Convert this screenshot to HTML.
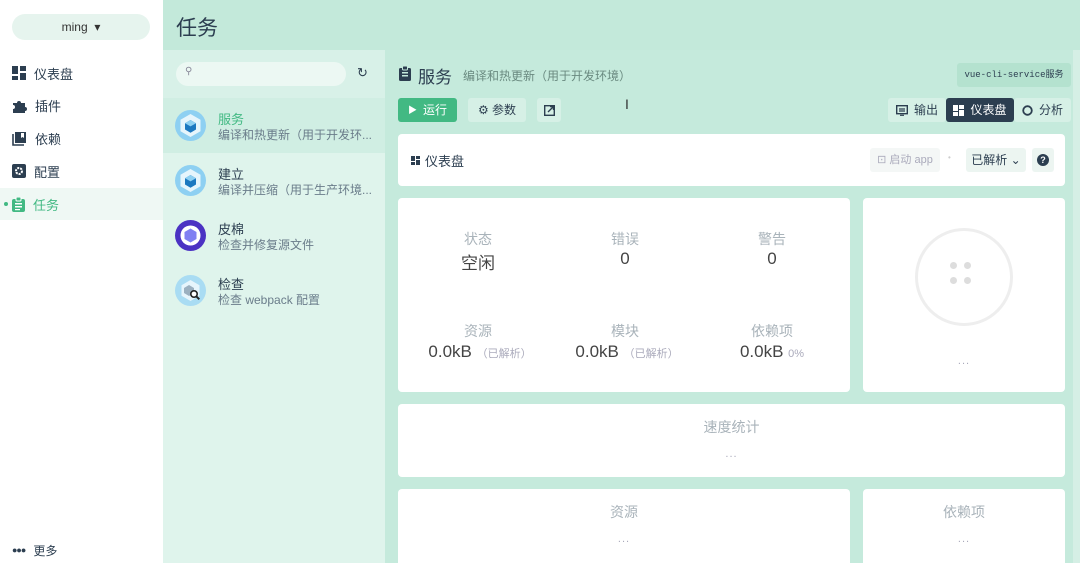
<!DOCTYPE html>
<html><head><meta charset="utf-8"><style>
*{box-sizing:border-box;margin:0;padding:0}
body{width:1080px;height:563px;overflow:hidden;position:relative;font-family:"Liberation Sans","Noto Sans CJK SC",sans-serif;background:#fff;color:#2c3e50}
.abs{position:absolute}
.side{left:0;top:0;width:163px;height:563px;background:#fff}
.pill{left:12px;top:14px;width:138px;height:26px;border-radius:13px;background:#e6f4ee;font-size:12px;text-align:center;line-height:26px;color:#333}
.nav{left:12px;font-size:13px;color:#2c3e50;display:flex;align-items:center;gap:8px;height:20px}
.hdr{left:163px;top:0;width:917px;height:50px;background:#c3e9da}
.list{left:163px;top:50px;width:222px;height:513px;background:#dff4ec}
.main{left:385px;top:50px;width:695px;height:513px;background:#c5eadc}
.item{left:163px;width:222px;height:55px}
.ic{position:absolute;left:12px;top:12px;width:31px;height:31px}
.it1{position:absolute;left:55px;top:11px;font-size:13px;color:#2c3e50}
.it2{position:absolute;left:55px;top:28px;font-size:12px;color:#6a7c8a;white-space:nowrap}
.card{background:#fff;border-radius:4px}
.btn{height:24px;border-radius:3px;font-size:12px;line-height:24px;display:flex;align-items:center;justify-content:center;gap:6px}
.lbl{font-size:14px;color:#a9b3ba;text-align:center}
.val{font-size:17px;color:#444;text-align:center}
.dots{font-size:11px;color:#aab;text-align:center;letter-spacing:1px}
</style></head><body>
<div class="abs side"></div>
<div class="abs pill">ming &nbsp;▾</div>
<div class="abs nav" style="top:63px"><svg width="14" height="14"><rect x="0" y="0" width="6" height="8" fill="#2c3e50"/><rect x="8" y="0" width="6" height="5" fill="#2c3e50"/><rect x="0" y="10" width="6" height="4" fill="#2c3e50"/><rect x="8" y="7" width="6" height="7" fill="#2c3e50"/></svg>仪表盘</div>
<div class="abs nav" style="top:95px"><svg width="15" height="15"><path d="M1 5h4a2 2 0 1 1 4 0h4v4a2 2 0 1 1 0 4v2H1v-4a2 2 0 1 0 0-4z" fill="#2c3e50"/></svg>插件</div>
<div class="abs nav" style="top:128px"><svg width="15" height="15"><path d="M3 1h11v11H3z" fill="#2c3e50"/><path d="M1 3v11h11" stroke="#2c3e50" stroke-width="1.6" fill="none"/><path d="M9 2v5l1.5-1 1.5 1V2" fill="#fff"/></svg>依赖</div>
<div class="abs nav" style="top:161px"><svg width="14" height="14"><rect width="14" height="14" rx="2" fill="#2c3e50"/><circle cx="7" cy="7" r="3" fill="none" stroke="#fff" stroke-width="2" stroke-dasharray="2 1"/></svg>配置</div>
<div class="abs" style="left:0;top:188px;width:163px;height:32px;background:#eff8f4"></div>
<div class="abs" style="left:4px;top:202px;width:4px;height:4px;border-radius:50%;background:#42b983"></div>
<div class="abs nav" style="top:194px;color:#42b983"><svg width="13" height="15"><rect y="2" width="13" height="13" rx="2" fill="#42b983"/><rect x="4" y="0" width="5" height="4" rx="1" fill="#42b983" stroke="#fff" stroke-width="1"/><rect x="3" y="6" width="7" height="1.5" fill="#fff"/><rect x="3" y="9" width="7" height="1.5" fill="#fff"/><rect x="3" y="12" width="5" height="1.2" fill="#fff"/></svg>任务</div>
<div class="abs nav" style="top:540px;font-size:12px"><span style="font-size:9px;letter-spacing:-1px">●●●</span>更多</div>

<div class="abs hdr"></div>
<div class="abs" style="left:176px;top:12px;font-size:21px;color:#2c3e50">任务</div>
<div class="abs list"></div>
<div class="abs" style="left:163px;top:50px;width:222px;height:48px;background:#d8f1e8"></div>
<div class="abs" style="left:176px;top:62px;width:170px;height:24px;border-radius:12px;background:#ecf8f3"></div>
<div class="abs" style="left:185px;top:66px;font-size:10px;color:#889">⚲</div>
<div class="abs" style="left:357px;top:65px;font-size:13px;color:#2c3e50">↻</div>
<div class="abs" style="left:163px;top:98px;width:222px;height:55px;background:#d0eee3"></div>

<svg width="0" height="0" style="position:absolute"><defs>
<g id="wp"><circle cx="15.5" cy="15.5" r="15.5" fill="#8ed0f2"/><path d="M15.5 4l10 5.8v11.4l-10 5.8-10-5.8V9.8z" fill="#e6f5fc"/><path d="M15.5 10l5.5 3.2v6.3l-5.5 3.2-5.5-3.2v-6.3z" fill="#1c78c0"/><path d="M15.5 10l5.5 3.2-5.5 3.2-5.5-3.2z" fill="#8ed0f2"/></g>
</defs></svg>
<div class="abs item" style="top:98px"><svg class="ic"><use href="#wp"/></svg><div class="it1" style="color:#42b983">服务</div><div class="it2">编译和热更新（用于开发环...</div></div>
<div class="abs item" style="top:153px"><svg class="ic"><use href="#wp"/></svg><div class="it1">建立</div><div class="it2">编译并压缩（用于生产环境...</div></div>
<div class="abs item" style="top:208px"><svg class="ic"><circle cx="15.5" cy="15.5" r="15.5" fill="#4b32c3"/><circle cx="15.5" cy="15.5" r="10" fill="#fff"/><path d="M15.5 8.5l6 3.5v7l-6 3.5-6-3.5v-7z" fill="#8080f2"/></svg><div class="it1">皮棉</div><div class="it2">检查并修复源文件</div></div>
<div class="abs item" style="top:263px"><svg class="ic"><circle cx="15.5" cy="15.5" r="15.5" fill="#a9dcf3"/><path d="M15.5 5l9 5.2v10.6l-9 5.2-9-5.2V10.2z" fill="#e6f5fc"/><path d="M14 10l5 3v5l-5 3-5-3v-5z" fill="#9bb0c0"/><circle cx="19" cy="19" r="3.2" fill="#fff" stroke="#222" stroke-width="1.6"/><path d="M21.3 21.3l3 3" stroke="#222" stroke-width="2"/></svg><div class="it1">检查</div><div class="it2">检查 webpack 配置</div></div>

<div class="abs main"></div>
<div class="abs" style="left:1073px;top:50px;width:7px;height:513px;background:#d5efe5"></div>
<svg class="abs" style="left:399px;top:66px" width="12" height="15"><rect y="2" width="12" height="13" rx="1.5" fill="#2c3e50"/><rect x="3.5" y="0" width="5" height="4" rx="1" fill="#2c3e50" stroke="#c5eadc"/><rect x="3" y="6" width="6" height="1.5" fill="#c5eadc"/><rect x="3" y="9" width="6" height="1.5" fill="#c5eadc"/></svg>
<div class="abs" style="left:418px;top:63px;font-size:17px;color:#2c3e50">服务</div>
<div class="abs" style="left:463px;top:67px;font-size:12px;color:#6a8a80">编译和热更新（用于开发环境）</div>
<div class="abs" style="left:957px;top:63px;width:114px;height:24px;background:#b4e2cf;border-radius:3px;font-family:'Liberation Mono','Noto Sans CJK SC',monospace;font-size:9px;line-height:24px;text-align:center;color:#2c3e50">vue-cli-service服务</div>

<div class="abs btn" style="left:398px;top:98px;width:59px;background:#42b983;color:#fff"><span style="font-size:9px">▶</span> 运行</div>
<div class="abs btn" style="left:468px;top:98px;width:58px;background:#d6f0e6">⚙ 参数</div>
<div class="abs btn" style="left:537px;top:98px;width:24px;background:#d6f0e6"><svg width="11" height="11"><rect x="0.7" y="0.7" width="9.6" height="9.6" fill="none" stroke="#2c3e50" stroke-width="1.4"/><path d="M4 7l5-5M6 1.5h3.5V5" stroke="#2c3e50" stroke-width="1.4" fill="none"/></svg></div>
<div class="abs" style="left:625px;top:96px;font-size:14px;color:#333">I</div>
<div class="abs btn" style="left:888px;top:98px;width:58px;background:#d6f0e6"><svg width="12" height="11"><rect x="0.7" y="0.7" width="10.6" height="8" fill="none" stroke="#2c3e50" stroke-width="1.4"/><path d="M3 4h6M3 6h6M4 10.3h4" stroke="#2c3e50" stroke-width="1.2"/></svg> 输出</div>
<div class="abs btn" style="left:946px;top:98px;width:68px;background:#2c3e50;color:#fff"><svg width="11" height="11"><rect width="5" height="6" fill="#fff"/><rect x="6" width="5" height="4" fill="#fff"/><rect y="7" width="5" height="4" fill="#fff"/><rect x="6" y="5" width="5" height="6" fill="#fff"/></svg> 仪表盘</div>
<div class="abs btn" style="left:1014px;top:98px;width:57px;background:#d6f0e6"><svg width="11" height="11"><circle cx="5.5" cy="5.5" r="4.3" fill="none" stroke="#2c3e50" stroke-width="1.8"/></svg> 分析</div>

<div class="abs card" style="left:398px;top:134px;width:667px;height:52px"></div>
<div class="abs" style="left:411px;top:151px;font-size:13px;display:flex;align-items:center;gap:5px"><svg width="9" height="9"><rect width="4" height="5" fill="#2c3e50"/><rect x="5" width="4" height="3" fill="#2c3e50"/><rect y="6" width="4" height="3" fill="#2c3e50"/><rect x="5" y="4" width="4" height="5" fill="#2c3e50"/></svg>仪表盘</div>
<div class="abs btn" style="left:870px;top:148px;width:70px;background:#f4f7f6;color:#aab;font-size:11px">⊡ 启动 app</div>
<div class="abs" style="left:948px;top:153px;font-size:8px;color:#ccc">•</div>
<div class="abs btn" style="left:966px;top:148px;width:60px;background:#ecf5f1;font-size:12px">已解析 ⌄</div>
<div class="abs btn" style="left:1032px;top:148px;width:22px;background:#ecf5f1"><span style="display:inline-block;width:12px;height:12px;border-radius:50%;background:#2c3e50;color:#fff;font-size:9px;line-height:12px;text-align:center;font-weight:bold">?</span></div>

<div class="abs card" style="left:398px;top:198px;width:452px;height:194px"></div>
<div class="abs lbl" style="left:428px;top:229px;width:100px">状态</div><div class="abs val" style="left:428px;top:249px;width:100px">空闲</div>
<div class="abs lbl" style="left:575px;top:229px;width:100px">错误</div><div class="abs val" style="left:575px;top:249px;width:100px">0</div>
<div class="abs lbl" style="left:722px;top:229px;width:100px">警告</div><div class="abs val" style="left:722px;top:249px;width:100px">0</div>
<div class="abs lbl" style="left:428px;top:321px;width:100px">资源</div><div class="abs val" style="left:410px;top:342px;width:140px">0.0kB <span style="font-size:11px;color:#aab">（已解析）</span></div>
<div class="abs lbl" style="left:575px;top:321px;width:100px">模块</div><div class="abs val" style="left:557px;top:342px;width:140px">0.0kB <span style="font-size:11px;color:#aab">（已解析）</span></div>
<div class="abs lbl" style="left:722px;top:321px;width:100px">依赖项</div><div class="abs val" style="left:712px;top:342px;width:120px">0.0kB <span style="font-size:11px;color:#aab">0%</span></div>

<div class="abs card" style="left:863px;top:198px;width:202px;height:194px"></div>
<div class="abs" style="left:915px;top:228px;width:98px;height:98px;border-radius:50%;border:3px solid #eee"></div>
<div class="abs" style="left:950px;top:262px;width:7px;height:7px;border-radius:50%;background:#ddd;box-shadow:14px 0 #ddd,0 15px #ddd,14px 15px #ddd"></div>
<div class="abs dots" style="left:863px;top:355px;width:202px">...</div>

<div class="abs card" style="left:398px;top:404px;width:667px;height:73px"></div>
<div class="abs lbl" style="left:398px;top:417px;width:667px">速度统计</div>
<div class="abs dots" style="left:398px;top:448px;width:667px">...</div>

<div class="abs card" style="left:398px;top:489px;width:452px;height:80px"></div>
<div class="abs lbl" style="left:398px;top:502px;width:452px">资源</div>
<div class="abs dots" style="left:398px;top:533px;width:452px">...</div>
<div class="abs card" style="left:863px;top:489px;width:202px;height:80px"></div>
<div class="abs lbl" style="left:863px;top:502px;width:202px">依赖项</div>
<div class="abs dots" style="left:863px;top:533px;width:202px">...</div>
</body></html>
